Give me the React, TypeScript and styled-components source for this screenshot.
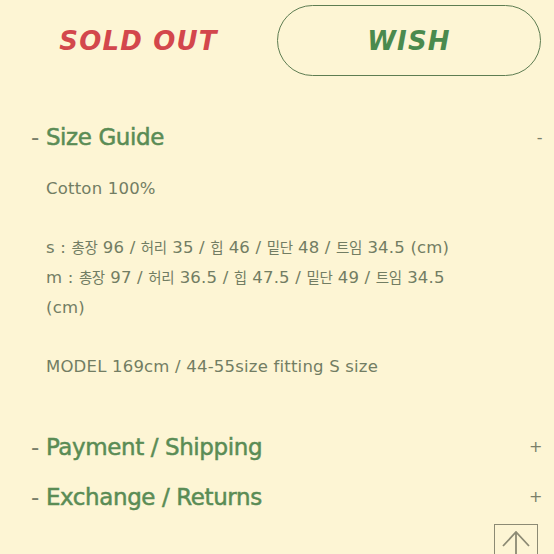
import React from 'react';
import styled, { createGlobalStyle } from 'styled-components';

const GlobalStyle = createGlobalStyle`
  html, body {
    margin: 0;
    padding: 0;
    background: #fdf5d4;
  }
  body {
    font-family: "DejaVu Sans", "Noto Sans CJK KR", sans-serif;
  }
`;

const Page = styled.div`
  width: 554px;
  height: 554px;
  overflow: hidden;
  background: #fdf5d4;
`;

const ActionRow = styled.div`
  display: grid;
  grid-template-columns: 1fr 264px;
  align-items: center;
  padding: 5px 13px 0 0;
  height: 71px;
`;

const SoldOut = styled.div`
  text-align: center;
  font-size: 26px;
  font-weight: 700;
  font-style: italic;
  letter-spacing: 1.2px;
  color: #d3474c;
`;

const WishButton = styled.button`
  height: 71px;
  border: 1.5px solid #5e7d52;
  border-radius: 36px;
  background: transparent;
  font-family: "DejaVu Sans", sans-serif;
  font-size: 26px;
  font-weight: 700;
  font-style: italic;
  letter-spacing: 1.2px;
  color: #4a8a4e;
`;

const Section = styled.section`
  padding: 0 12px 0 31px;
`;

const Header = styled.div<{ $first?: boolean }>`
  display: flex;
  justify-content: space-between;
  align-items: center;
  height: 50px;
  margin-top: ${p => (p.$first ? '36px' : '0')};
  color: #5a8c55;
  font-size: 23px;
  letter-spacing: -0.4px;
  -webkit-text-stroke: 0.5px #5a8c55;
`;

const Dash = styled.span`
  color: #7a7f6a;
  -webkit-text-stroke: 0;
  margin-right: 7px;
`;

const Toggle = styled.span`
  color: #7a7f6a;
  -webkit-text-stroke: 0;
  font-size: 16px;
`;

const Body = styled.div`
  padding: 12px 0 40px 15px;
  font-size: 16.5px;
  line-height: 29.7px;
  letter-spacing: 0.2px;
  color: #727d63;
  white-space: nowrap;
`;

const Line = styled.div<{ $blankAfter?: boolean }>`
  height: 29.7px;
  margin-bottom: ${p => (p.$blankAfter ? '29.7px' : '0')};
`;

const Ko = styled.span`
  font-family: "Noto Sans CJK KR", sans-serif;
  font-size: 14.5px;
  line-height: 1;
  letter-spacing: -0.4px;
`;

const TopRow = styled.div`
  display: flex;
  justify-content: flex-end;
  padding: 2px 16px 0 0;
`;

const TopButton = styled.div`
  width: 44px;
  height: 44px;
  border: 1.5px solid #8c8a74;
  display: flex;
  justify-content: center;
  padding-top: 6px;
  box-sizing: border-box;
`;

export default function App() {
  return (
    <Page>
      <GlobalStyle />
      <ActionRow>
        <SoldOut>SOLD OUT</SoldOut>
        <WishButton>WISH</WishButton>
      </ActionRow>
      <Section>
        <Header $first>
          <span><Dash>-</Dash>Size Guide</span>
          <Toggle>-</Toggle>
        </Header>
        <Body>
          <Line $blankAfter>Cotton 100%</Line>
          <Line>
            s : <Ko>총장</Ko> 96 / <Ko>허리</Ko> 35 / <Ko>힙</Ko> 46 / <Ko>밑단</Ko> 48 / <Ko>트임</Ko> 34.5 (cm)
          </Line>
          <Line>
            m : <Ko>총장</Ko> 97 / <Ko>허리</Ko> 36.5 / <Ko>힙</Ko> 47.5 / <Ko>밑단</Ko> 49 / <Ko>트임</Ko> 34.5
          </Line>
          <Line $blankAfter>(cm)</Line>
          <Line>MODEL 169cm / 44-55size fitting S size</Line>
        </Body>
        <Header>
          <span><Dash>-</Dash>Payment / Shipping</span>
          <Toggle>+</Toggle>
        </Header>
        <Header>
          <span><Dash>-</Dash>Exchange / Returns</span>
          <Toggle>+</Toggle>
        </Header>
      </Section>
      <TopRow>
        <TopButton>
          <svg width="32" height="36" viewBox="0 0 32 36" fill="none" stroke="#8c8a74" strokeWidth="1.8">
            <path d="M16 1 V36 M3 15 L16 1 L29 15" />
          </svg>
        </TopButton>
      </TopRow>
    </Page>
  );
}
